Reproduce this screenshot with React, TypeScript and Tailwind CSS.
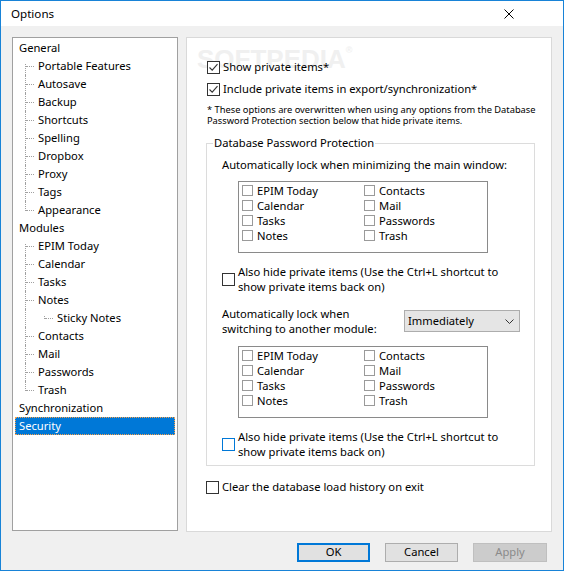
import React from "react";

type TreeNode = {
  label: string;
  level: 0 | 1 | 2;
  first?: boolean;
  last?: boolean;
  selected?: boolean;
};

const nodes: TreeNode[] = [
  { label: "General", level: 0 },
  { label: "Portable Features", level: 1, first: true },
  { label: "Autosave", level: 1 },
  { label: "Backup", level: 1 },
  { label: "Shortcuts", level: 1 },
  { label: "Spelling", level: 1 },
  { label: "Dropbox", level: 1 },
  { label: "Proxy", level: 1 },
  { label: "Tags", level: 1 },
  { label: "Appearance", level: 1, last: true },
  { label: "Modules", level: 0 },
  { label: "EPIM Today", level: 1, first: true },
  { label: "Calendar", level: 1 },
  { label: "Tasks", level: 1 },
  { label: "Notes", level: 1 },
  { label: "Sticky Notes", level: 2, first: true, last: true },
  { label: "Contacts", level: 1 },
  { label: "Mail", level: 1 },
  { label: "Passwords", level: 1 },
  { label: "Trash", level: 1, last: true },
  { label: "Synchronization", level: 0 },
  { label: "Security", level: 0, selected: true },
];

function Connector({ first, last }: { first?: boolean; last?: boolean }) {
  let v = "top-0 h-[18px]";
  if (first && last) v = "top-[7px] h-[3px]";
  else if (first) v = "top-[7px] h-[11px]";
  else if (last) v = "top-0 h-[10px]";
  return (
    <span className="relative w-[13px] h-[18px] shrink-0">
      <span className={`absolute left-0 ${v} border-l border-dotted border-[#a0a0a0]`} />
      <span className="absolute left-[1px] top-[9px] w-[8px] border-t border-dotted border-[#a0a0a0]" />
    </span>
  );
}

function TreeRow({ node }: { node: TreeNode }) {
  if (node.level === 0) {
    return (
      <div
        className={
          node.selected
            ? "h-[18px] flex items-center pl-[4px] bg-[#0078d7] text-white outline-1 outline-dotted outline-[#f7a04a] outline-offset-[-1px]"
            : "h-[18px] flex items-center pl-[4px]"
        }
      >
        {node.label}
      </div>
    );
  }
  if (node.level === 1) {
    return (
      <div className="h-[18px] flex items-center">
        <span className="w-[10px] shrink-0" />
        <Connector first={node.first} last={node.last} />
        <span>{node.label}</span>
      </div>
    );
  }
  return (
    <div className="h-[18px] flex items-center">
      <span className="w-[10px] shrink-0" />
      <span className="w-[19px] h-[18px] shrink-0 border-l border-dotted border-[#a0a0a0]" />
      <Connector first={node.first} last={node.last} />
      <span>{node.label}</span>
    </div>
  );
}

function BigCheck({ checked, focus }: { checked?: boolean; focus?: boolean }) {
  return (
    <span
      className={
        focus
          ? "w-[13px] h-[13px] shrink-0 border border-[#0078d7] bg-white flex items-center justify-center"
          : "w-[13px] h-[13px] shrink-0 border border-[#333333] bg-white flex items-center justify-center"
      }
    >
      {checked && (
        <svg width="11" height="11" viewBox="0 0 11 11">
          <path d="M1.5 5.5 L4.2 8.2 L9.5 2.2" fill="none" stroke="#333333" strokeWidth="1.1" />
        </svg>
      )}
    </span>
  );
}

function SmallCheck() {
  return <span className="w-[11px] h-[11px] shrink-0 border border-[#9a9a9a] bg-white" />;
}

const listItems = ["EPIM Today", "Calendar", "Tasks", "Notes", "Contacts", "Mail", "Passwords", "Trash"];

function ModuleList() {
  return (
    <div className="ml-[16px] w-[250px] h-[72px] border border-[#8a8a8a] bg-white pt-[1px] pl-[3px] grid grid-flow-col grid-rows-[15px_15px_15px_15px] grid-cols-[122px_122px] content-start">
      {listItems.map((t) => (
        <div key={t} className="h-[15px] flex items-center">
          <SmallCheck />
          <span className="ml-[4px] leading-[15px] whitespace-nowrap">{t}</span>
        </div>
      ))}
    </div>
  );
}

function HideRow({ focus }: { focus?: boolean }) {
  return (
    <div className="mt-[11px] flex items-center">
      <BigCheck focus={focus} />
      <div className="ml-[3px] leading-[15px] whitespace-nowrap">
        Also hide private items (Use the Ctrl+L shortcut to
        <br />
        show private items back on)
      </div>
    </div>
  );
}

export default function App() {
  return (
    <div className="w-[564px] h-[571px] border border-[#1883d7] bg-[#f0f0f0] flex flex-col text-[11.2px] text-black font-['Segoe_UI','Noto_Sans',sans-serif] overflow-hidden">
      {/* Title bar */}
      <div className="h-[25px] shrink-0 bg-white flex items-center justify-between pl-[10px] pr-[49px]">
        <span className="leading-[16px] text-[11.6px]">Options</span>
        <svg width="10" height="10" viewBox="0 0 10 10">
          <path d="M0.5 0.5 L9.5 9.5 M9.5 0.5 L0.5 9.5" stroke="#000" strokeWidth="1" />
        </svg>
      </div>

      <div className="flex flex-col px-[11px] pt-[11px]">
        <div className="flex gap-[8px]">
          {/* Tree */}
          <div className="w-[166px] h-[494px] border border-[#a0a0a0] bg-white pt-[1px] px-[2px]">
            {nodes.map((n) => (
              <TreeRow key={n.label} node={n} />
            ))}
          </div>

          {/* Right panel */}
          <div className="relative w-[366px] h-[495px] bg-white border border-[#d9d9d9] pl-[19px] pt-[20px] flex flex-col">
            <div className="absolute left-[10px] top-[6px] pointer-events-none select-none flex items-start text-[#f0f0f0] font-['Liberation_Sans',sans-serif] font-bold">
              <span className="text-[26px] leading-[30px]">SOFTPEDIA</span>
              <span className="text-[9px] leading-[10px] mt-[1px]">®</span>
            </div>

            <div className="relative h-[18px] flex items-center pl-[1px]">
              <BigCheck checked />
              <span className="ml-[3px]">Show private items*</span>
            </div>
            <div className="relative mt-[4px] h-[18px] flex items-center pl-[1px]">
              <BigCheck checked />
              <span className="ml-[3px]">Include private items in export/synchronization*</span>
            </div>
            <div className="relative mt-[6px] pl-[1px] text-[9.3px] leading-[11px] whitespace-nowrap">
              <div className="h-[11px]">* These options are overwritten when using any options from the Database</div>
              <div className="h-[11px]">Password Protection section below that hide private items.</div>
            </div>

            {/* Group box */}
            <div className="relative mt-[9px] w-[329px]">
              <div className="flex h-[16px] items-center">
                <div className="w-[7px] h-[8px] self-end border-l border-t border-[#dcdcdc]" />
                <span className="px-[1px] leading-[16px]">Database Password Protection</span>
                <div className="flex-1 h-[8px] self-end border-r border-t border-[#dcdcdc]" />
              </div>
              <div className="border-l border-r border-b border-[#dcdcdc] pl-[15px] pb-[6px] flex flex-col">
                <div className="mt-[6px] leading-[16px]">Automatically lock when minimizing the main window:</div>
                <div className="mt-[8px]">
                  <ModuleList />
                </div>
                <HideRow />
                <div className="mt-[12px] flex items-center">
                  <div className="w-[182px] leading-[15px] whitespace-nowrap">
                    Automatically lock when
                    <br />
                    switching to another module:
                  </div>
                  <div className="w-[116px] h-[22px] bg-[#e5e5e5] border border-[#adadad] flex items-center justify-between pl-[3px] pr-[5px]">
                    <span>Immediately</span>
                    <svg width="9" height="5" viewBox="0 0 9 5">
                      <path d="M0.5 0.5 L4.5 4.5 L8.5 0.5" fill="none" stroke="#333" strokeWidth="1" />
                    </svg>
                  </div>
                </div>
                <div className="mt-[10px]">
                  <ModuleList />
                </div>
                <HideRow focus />
              </div>
            </div>

            <div className="relative mt-[12px] h-[18px] flex items-center">
              <BigCheck />
              <span className="ml-[3px]">Clear the database load history on exit</span>
            </div>
          </div>
        </div>

        {/* Buttons */}
        <div className="mt-[11px] flex justify-end gap-[15px] pr-[5px]">
          <button className="w-[73px] h-[19px] border-2 border-[#0078d7] bg-[#e1e1e1] flex items-center justify-center">
            OK
          </button>
          <button className="w-[73px] h-[19px] border border-[#adadad] bg-[#e1e1e1] flex items-center justify-center">
            Cancel
          </button>
          <button className="w-[74px] h-[19px] border border-[#bfbfbf] bg-[#cccccc] text-[#8a8a8a] flex items-center justify-center">
            Apply
          </button>
        </div>
      </div>
    </div>
  );
}
